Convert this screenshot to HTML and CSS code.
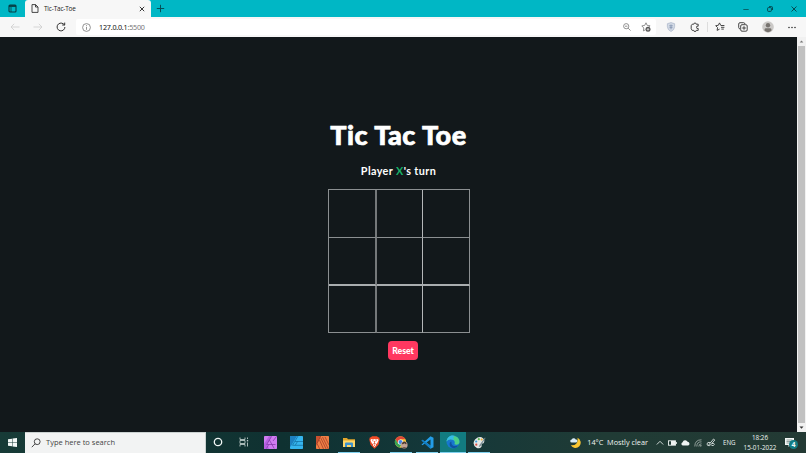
FILE: index.html
```html
<!DOCTYPE html>
<html lang="en">

<head>
  <meta charset="UTF-8">
  <title>Tic-Tac-Toe</title>
  <meta name="viewport" content="width=device-width, initial-scale=1.0">
  <link rel="stylesheet" href="styles.css">
</head>

<body>
  <!-- Tabs -->
  <header class="tabs">
    <div class="tab-menu">
      <svg width="9" height="9" viewBox="0 0 9 9"><rect x="1" y="1" width="7" height="7" rx="1" fill="none" stroke="#063c43" stroke-width="1.1"/><path d="M1 2h7" stroke="#063c43" stroke-width="1.800"/><path d="M3 3v5" stroke="#063c43" stroke-width=".8"/></svg>
    </div>
    <div class="tab">
      <svg width="8" height="9" viewBox="0 0 8 9" fill="none" stroke="#333" stroke-width=".9"><path d="M1 .6h3.600L7 3v5.400H1zM4.500.6V3H7"/></svg>
      <span class="tab-title">Tic-Tac-Toe</span>
      <svg width="6" height="6" viewBox="0 0 6 6" stroke="#222" stroke-width=".9"><path d="M.8.8l4.400 4.400M5.200.8L.8 5.200"/></svg>
    </div>
    <svg class="new-tab" width="9" height="9" viewBox="0 0 9 9" stroke="#064f57" stroke-width="1"><path d="M4.500.8v7.400M.8 4.500h7.400"/></svg>
    <div class="window-buttons">
      <svg width="6" height="6" viewBox="0 0 6 6" stroke="#064f57"><path d="M.3 3.500h5.400" stroke-width=".8"/></svg>
      <svg width="6" height="6" viewBox="0 0 6 6" fill="none" stroke="#053f46" stroke-width=".9"><rect x=".6" y="1.600" width="3.800" height="3.800" rx=".8"/><path d="M2 .6h2.500q1 0 1 1V4"/></svg>
      <svg width="6" height="6" viewBox="0 0 6 6" stroke="#053f46" stroke-width=".9"><path d="M.5.5l5 5M5.500.5l-5 5"/></svg>
    </div>
  </header>

  <!-- Toolbar -->
  <nav class="toolbar">
    <div class="nav-buttons">
      <svg width="10" height="8" viewBox="0 0 10 8" fill="none" stroke="#d0d0d0" stroke-width=".9"><path d="M9.500 4H1M4.200.8L1 4l3.200 3.200"/></svg>
      <svg width="10" height="8" viewBox="0 0 10 8" fill="none" stroke="#d0d0d0" stroke-width=".9"><path d="M.5 4H9M5.800.8L9 4 5.800 7.200"/></svg>
      <svg width="10" height="10" viewBox="0 0 10 10" fill="none" stroke="#333" stroke-width="1"><path d="M8.900 5A3.900 3.900 0 1 1 7.400 1.900L8.600 3M8.700.6V3H6.200"/></svg>
    </div>
    <div class="address">
      <svg width="9" height="9" viewBox="0 0 9 9" fill="none" stroke="#777" stroke-width=".8"><circle cx="4.500" cy="4.500" r="3.900"/><path d="M4.500 4v2.800M4.500 2.200v1"/></svg>
      <span class="url">127.0.0.1<span class="port">:5500</span></span>
      <svg class="zoom" width="8" height="8" viewBox="0 0 8 8" fill="none" stroke="#777" stroke-width=".8"><circle cx="3.200" cy="3.200" r="2.600"/><path d="M5.100 5.100l2.500 2.500M2 3.200h2.400"/></svg>
      <svg width="10" height="10" viewBox="0 0 10 10"><path d="M5 .8l1.200 2.600 2.900.4L7 5.700M4.200 7.900L2.400 8.900l.4-2.900L.8 3.900l2.900-.5L5 .8" fill="none" stroke="#777" stroke-width=".8"/><circle cx="7" cy="7.300" r="2.500" fill="#555"/><path d="M7 6v2.600M5.700 7.300h2.600" stroke="#fff" stroke-width=".6"/></svg>
    </div>
    <div class="tools">
      <svg width="10" height="10" viewBox="0 0 10 10"><path d="M5 .6l3.600 1.100v3Q8.400 8 5 9.500 1.600 8 1.400 4.700v-3z" fill="#d3dae5" stroke="#a9b5c8" stroke-width=".7"/><path d="M5 2.500v4.800M3.200 3.800h3.600M3.500 5.600h3" stroke="#8292ae" stroke-width=".8"/></svg>
      <svg width="10" height="10" viewBox="0 0 10 10" fill="none" stroke="#444" stroke-width="1"><path d="M2.200 2.200h1.600a1.200 1.200 0 0 1 2.400 0h2v2a1.200 1.200 0 1 0 0 2.200v2H6.200a1.200 1.200 0 0 1-2.400 0H2.200l-1-1.600V3.700z"/></svg>
      <svg width="10" height="10" viewBox="0 0 10 10" fill="none" stroke="#333" stroke-width=".9"><path d="M6 3.300H5.700L4.500.9 3.300 3.300l-2.600.4 1.900 1.900-.5 2.800 2.500-1.300M6 3.500h3.400M6 5.300h3.400M6.300 7.100h2.500"/></svg>
      <svg width="10" height="10" viewBox="0 0 10 10" fill="none" stroke="#333" stroke-width=".9"><path d="M2 7Q.7 6.700.7 5.500V2Q.7.7 2 .7h3.600Q6.800.7 7 2"/><rect x="2.700" y="2.700" width="6.500" height="6.500" rx="1.300"/><path d="M6 4.200v3.600M4.200 6h3.600"/></svg>
      <svg width="12" height="12" viewBox="0 0 12 12"><circle cx="6" cy="6" r="5.800" fill="#cbc9c7"/><circle cx="6" cy="4.300" r="2.200" fill="#77736f"/><path d="M2.600 9.800V8.500Q2.600 7.200 4 7.200h4q1.400 0 1.400 1.300v1.300Q6 12.600 2.600 9.800" fill="#77736f"/></svg>
      <svg width="8" height="3" viewBox="0 0 8 3" fill="#333"><circle cx="1" cy="1.500" r=".8"/><circle cx="4" cy="1.500" r=".8"/><circle cx="7" cy="1.500" r=".8"/></svg>
    </div>
  </nav>

  <!-- Game -->
  <div class="viewport">
    <main class="game">
      <h1 class="title">Tic Tac Toe</h1>
      <p class="status">Player <span class="player-x">X</span>'s turn</p>
      <div class="board">
        <div class="cell"></div>
        <div class="cell"></div>
        <div class="cell"></div>
        <div class="cell"></div>
        <div class="cell"></div>
        <div class="cell"></div>
        <div class="cell"></div>
        <div class="cell"></div>
        <div class="cell"></div>
      </div>
      <button class="reset">Reset</button>
    </main>
    <div class="scrollbar">
      <svg width="9" height="9" viewBox="0 0 9 9"><path d="M2.700 5.500h3.600L4.500 3.500z" fill="#777"/></svg>
      <div class="thumb"></div>
      <svg width="9" height="9" viewBox="0 0 9 9"><path d="M2.500 3.500h4l-2 2.300z" fill="#333"/></svg>
    </div>
  </div>

  <!-- Taskbar -->
  <footer class="taskbar">
    <div class="start">
      <svg width="9" height="9" viewBox="0 0 9 9" fill="#f3f8f7"><path d="M0 1.300L4 .7v3.500H0zM4.500.6L9 0v4.200H4.500zM0 4.800h4v3.500L0 7.700zM4.500 4.800H9V9l-4.500-.6z"/></svg>
    </div>
    <div class="search">
      <svg width="10" height="10" viewBox="0 0 10 10" fill="none" stroke="#333" stroke-width=".9"><circle cx="6.200" cy="3.700" r="2.900"/><path d="M4.100 5.800L.8 9.200"/></svg>
      <span>Type here to search</span>
    </div>
    <div class="apps">
      <div class="app"><svg width="10" height="10" viewBox="0 0 10 10"><circle cx="5" cy="5" r="3.700" fill="none" stroke="#f1f6f5" stroke-width="1.300"/></svg></div>
      <div class="app"><svg width="10" height="10" viewBox="0 0 10 10" fill="none" stroke="#b9c7c5" stroke-width=".9"><path d="M1 .5v2h5v-2M1 9.500v-2h5v2M1 3.500h5v3H1zM8.500.5v1.500M8.500 5.500v4"/><path d="M7.800 3.700h1.400" stroke-width="1.500"/></svg></div>
      <div class="app"><svg width="13" height="13" viewBox="0 0 13 13"><rect width="13" height="13" rx=".8" fill="#cf7cf2"/><path d="M0 8l5-8h3L3 8l2 5H0z" fill="#b45fe0"/><path d="M7.500.5L2.700 8.500h8.800M5.400 4l4.800 8.500M9 5l3.500-4.500M4.800 8.500L2.500 12.500" fill="none" stroke="#7d35a5" stroke-width=".7"/></svg></div>
      <div class="app"><svg width="13" height="13" viewBox="0 0 13 13"><rect width="13" height="13" rx=".8" fill="#35b5ee"/><path d="M0 0h7L1 10l-1 1z" fill="#1d80c0"/><path d="M8 0L2.500 9.300H13M5 5.500h8M7.500 5.500L5.200 9.300" fill="none" stroke="#136a9d" stroke-width=".7"/></svg></div>
      <div class="app"><svg width="13" height="13" viewBox="0 0 13 13"><rect width="13" height="13" rx=".8" fill="#ef7f45"/><path d="M0 0h5L1 8l-1 2z" fill="#c65130"/><path d="M4.800 0L1 7.500 3.700 13M3.500 4l4 9M4.800 2l5.300 11M6.500 1l5.800 12M9 1l4 8" fill="none" stroke="#9c3826" stroke-width=".7"/></svg></div>
      <div class="app open"><svg width="12" height="11" viewBox="0 0 12 11"><path d="M0 1h4l1 1.200h7V10H0z" fill="#e4a62c"/><path d="M0 3.500h12V10H0z" fill="#ffd767"/><path d="M2 10V6.500q0-1 1-1h6q1 0 1 1V10H8V8H4v2z" fill="#3e93ce"/></svg></div>
      <div class="app"><svg width="11" height="13" viewBox="0 0 11 13"><path d="M3 .3h5l1 1 1.200.2.500 2-1.200 5.200-4 4-4-4L.3 3.500l.5-2L2 1.300z" fill="#f04b26"/><path d="M2 3l2 .5 1.500-.5L7 3.500 9 3l.5 1.500-1.500 3-1.300.8L7 9.500 5.500 11 4 9.500l.3-1.200L3 7.500l-1.500-3z" fill="#fff"/><path d="M3.200 4.600l1.300.5M7.800 4.600l-1.300.5M5.500 5v2.500M4.500 7.500l1 .6 1-.6M5.500 9v1" stroke="#f04b26" stroke-width=".8"/></svg></div>
      <div class="app open"><svg width="14" height="13" viewBox="0 0 14 13"><circle cx="6.500" cy="6" r="5.700" fill="#f7cb3d"/><path d="M1.500 3.200a5.700 5.700 0 0 1 10 0H6.500L4 7.200z" fill="#df4637"/><path d="M1.500 3.200a5.700 5.700 0 0 0 4 8.300L8 7.500H4z" fill="#37a456"/><circle cx="6.500" cy="6" r="2.600" fill="#fff"/><circle cx="6.500" cy="6" r="2" fill="#4285e8"/><circle cx="10.200" cy="9" r="3.400" fill="#c2a394"/><path d="M7.800 8q.5-2.500 2.500-2.500T12.700 8l-1 .3-1-1-2 1z" fill="#4b3932"/><path d="M8 12q2-2 4.500-.2-2 1.200-4.500.2" fill="#70564d"/></svg></div>
      <div class="app open"><svg width="13" height="13" viewBox="0 0 13 13"><path d="M9.500.3l3 1.400v9.600l-3 1.400L3.700 7.500 1.500 9.200.5 8.500 3 6.500.5 4.500l1-.7 2.200 1.700zM9.500 3.500L5.500 6.500l4 3z" fill="#239de8" fill-rule="evenodd"/><path d="M.5 4.500l1-.7 8 6v2.900L3.700 7.500z" fill="#127bc0"/></svg></div>
      <div class="app open active"><svg width="14" height="14" viewBox="0 0 14 14"><circle cx="7" cy="7" r="6.500" fill="#1777cf"/><path d="M.6 6.500C1.200-1.500 13.500-1 13.500 7c0 2.300-2.300 3-4.500 2.500C7.800 9.200 9.200 8 8.700 6.700 7.500 3.700 2.400 3.500.6 6.500" fill="#4bcf88"/><path d="M.6 6.500C1.200 1 6-.5 9 1 6 2 8 4 8.700 6.700 7.500 3.700 2.400 3.500.6 6.500" fill="#35bbe7"/><path d="M5.600 6.800c-1 3 2 5.300 6.500 3.800-3 4.500-9 2.500-8.500-1.800.2-1.500 1-2 2-2" fill="#0f529f"/></svg></div>
      <div class="app open"><svg width="13" height="13" viewBox="0 0 13 13"><path d="M2 3.500Q6.500-.5 10 2.200q2.500 2 .5 5l-1.800.5-.2 3q-2 2.500-5 1Q-1.500 8.500 2 3.500" fill="#e4e8e7"/><circle cx="3.200" cy="5.500" r="1.100" fill="#3c9fdd"/><circle cx="5.800" cy="3.200" r="1.100" fill="#5eb554"/><circle cx="8.700" cy="3.500" r="1" fill="#edae35"/><circle cx="3.300" cy="8.700" r="1.100" fill="#d84d45"/><path d="M12 1.500L6.500 9l-.8 2.300 2-1.400L12.500 2z" fill="#7a8d95"/></svg></div>
    </div>
    <div class="weather">
      <svg width="12" height="12" viewBox="0 0 12 12"><path d="M7.500.8a5.300 5.300 0 1 1-6.700 7.500Q8.500 9 7.500.8" fill="#fbc632"/><path d="M1.700 5.500a1.500 1.500 0 0 1 0-3 2.200 2.200 0 0 1 4 0 1.500 1.500 0 0 1 .3 3z" fill="#d9ecf8"/></svg>
      <span>14°C&nbsp; Mostly clear</span>
    </div>
    <div class="tray">
      <svg width="8" height="8" viewBox="0 0 8 8" fill="none" stroke="#dfe7e4" stroke-width=".9"><path d="M.8 5.500L4 2.300l3.200 3.200"/></svg>
      <svg width="9" height="8" viewBox="0 0 9 8"><rect x=".5" y="1.800" width="7" height="4.400" fill="none" stroke="#eef3f1" stroke-width=".9"/><path d="M3 2h4.300v4H3zM8 3h.8v2H8z" fill="#eef3f1"/></svg>
      <svg width="9" height="8" viewBox="0 0 9 8"><path d="M1.800 6.500a1.700 1.700 0 0 1-.2-3.300A2.700 2.700 0 0 1 6.600 2.800a1.900 1.900 0 0 1 .6 3.700z" fill="#f0f4f3"/></svg>
      <svg width="8" height="8" viewBox="0 0 8 8" fill="none" stroke="#a9b6b1" stroke-width=".8"><path d="M.8 7.500Q.8.800 7.500.8M2.800 7.500q0-4.700 4.700-4.700M4.800 7.500q0-2.700 2.700-2.700"/><circle cx="6.800" cy="6.800" r=".5"/></svg>
      <svg width="10" height="9" viewBox="0 0 10 9" fill="none" stroke="#d7dfdc" stroke-width=".9"><path d="M3 6.500L7.500 1l1.300 1L4.500 7 2.800 7.300zM4.500 4.500Q1 3.700 1 6q0 2 2.500 1.700M6 5.500q2.500-.5 2.300 1Q8 8 5.500 7.500"/></svg>
      <span class="lang">ENG</span>
      <div class="clock">
        <span>18:26</span>
        <span>15-01-2022</span>
      </div>
      <div class="notifications">
        <svg width="9" height="9" viewBox="0 0 9 9"><path d="M0 0h9v7H5.500L3.500 9V7H0z" fill="#f2f6f5"/><path d="M1.500 2h6M1.500 3.500h6M1.500 5h3" stroke="#526b65" stroke-width=".6"/></svg>
        <span class="badge">4</span>
      </div>
    </div>
  </footer>
</body>

</html>
```
FILE: styles.css
```css
* {
  box-sizing: border-box;
}

body {
  margin: 0;
  height: 100vh;
  display: flex;
  flex-direction: column;
  overflow: hidden;
  font-family: "Open Sans", "Noto Sans", sans-serif;
  background-color: #12181b;
}

svg {
  display: block;
  flex: none;
}

/* Tabs */
.tabs {
  height: 17px;
  flex: none;
  display: flex;
  align-items: center;
  background-color: #00b7c5;
}

.tab-menu {
  width: 25px;
  display: flex;
  justify-content: center;
}

.tab {
  width: 126px;
  height: 17px;
  display: flex;
  align-items: center;
  gap: 5px;
  padding: 0 6px;
  background-color: #f7f7f7;
  border-radius: 3px 3px 0 0;
  font-size: 6.4px;
  letter-spacing: -0.15px;
  color: #222;
}

.tab-title {
  flex: 1;
}

.new-tab {
  margin-left: 5px;
}

.window-buttons {
  display: flex;
  gap: 18px;
  margin-left: auto;
  padding-right: 9px;
}

/* Toolbar */
.toolbar {
  height: 20px;
  flex: none;
  display: flex;
  align-items: center;
  background-color: #f7f7f7;
}

.nav-buttons {
  width: 76px;
  display: flex;
  align-items: center;
  gap: 13px;
  padding-left: 10px;
}

.address {
  width: 580px;
  height: 16px;
  display: flex;
  align-items: center;
  padding: 0 5px 0 6px;
  background-color: #fff;
  border-radius: 2px;
}

.url {
  margin-left: 8px;
  font-family: "Noto Sans", sans-serif;
  font-size: 7.2px;
  letter-spacing: -0.22px;
  color: #111;
}

.port {
  color: #777;
}

.zoom {
  margin-left: auto;
  margin-right: 10px;
}

.tools {
  flex: 1;
  display: flex;
  align-items: center;
  justify-content: space-between;
  padding: 0 10px 0 10px;
}

.tools svg:nth-child(2) {
  box-sizing: content-box;
  padding-right: 7px;
  margin-right: -7px;
  border-right: 1px solid #ddd;
}

/* Game */
.viewport {
  flex: 1;
  display: flex;
  min-height: 0;
}

.game {
  flex: 1;
  display: flex;
  flex-direction: column;
  align-items: center;
  padding: 79px 0 0;
  color: #fff;
}

.title {
  height: 38px;
  margin: 0;
  font-family: "Lato", sans-serif;
  font-size: 27px;
  font-weight: 900;
  line-height: 38px;
  letter-spacing: 0.5px;
  white-space: nowrap;
  -webkit-text-stroke: 0.7px #fff;
}

.status {
  height: 16px;
  margin: 9px 0 10px;
  font-family: "Lato", sans-serif;
  font-size: 10.8px;
  font-weight: bold;
  line-height: 16px;
  letter-spacing: 0.4px;
}

.player-x {
  color: #18b068;
}

.board {
  width: 142px;
  height: 144px;
  display: grid;
  grid-template-columns: 48px 46px 47px;
  grid-template-rows: 48px 48px 47px;
  border-left: 1px solid #8b8f91;
  border-top: 1px solid #8b8f91;
}

.cell {
  border-right: 1px solid #b4b7b9;
  border-bottom: 1px solid #8b8f91;
}

.cell:nth-child(3n) {
  border-right-color: #8b8f91;
}

.cell:nth-child(3n + 1) {
  border-right: 2px solid #74787a;
}

.cell:nth-child(n + 4):nth-child(-n + 6) {
  border-bottom: 2px solid #a9adaf;
}

.reset {
  width: 30px;
  height: 19px;
  margin-top: 8px;
  margin-left: 9px;
  padding: 0;
  border: none;
  border-radius: 4px;
  background-color: #ff3860;
  color: #fff;
  font-family: "Lato", sans-serif;
  font-size: 8.7px;
  font-weight: 900;
  cursor: pointer;
}

.scrollbar {
  width: 9px;
  display: flex;
  flex-direction: column;
  background-color: #f1f1f1;
}

.thumb {
  flex: 1;
  margin: 0 1px;
  background-color: #c1c1c1;
}

/* Taskbar */
.taskbar {
  height: 21px;
  flex: none;
  display: flex;
  align-items: center;
  background: linear-gradient(90deg, #173b37, #0f3131 35%, #14383a 55%, #203b35 75%, #233a34);
  color: #f0f5f3;
}

.start {
  width: 25px;
  display: flex;
  justify-content: center;
}

.search {
  width: 181px;
  height: 21px;
  display: flex;
  align-items: center;
  gap: 5px;
  padding-left: 6px;
  background-color: #f2f3f3;
  border: 1px solid #cbd2d1;
  border-width: 1px 1px 0 0;
  color: #444;
  font-size: 7.5px;
}

.search span {
  margin-top: -2px;
}

.apps {
  display: flex;
}

.app {
  width: 26px;
  height: 21px;
  display: flex;
  align-items: center;
  justify-content: center;
  padding-right: 2px;
  border-bottom: 1px solid transparent;
}

.open {
  padding-right: 0;
  background: linear-gradient(#7fd0ee, #7fd0ee) center bottom / 22px 1px no-repeat border-box;
}

.active {
  background-color: #127b80;
  border-bottom-color: #7fd0ee;
}

.weather {
  display: flex;
  align-items: center;
  gap: 5px;
  margin-left: auto;
  font-size: 7.3px;
  white-space: nowrap;
}

.weather span {
  margin-top: -1px;
}

.tray {
  display: flex;
  align-items: center;
  gap: 4px;
  padding-left: 8px;
}

.lang {
  width: 14px;
  margin-left: 3px;
  font-size: 6.2px;
}

.clock {
  width: 34px;
  margin-left: 2px;
  display: flex;
  flex-direction: column;
  align-items: center;
  font-size: 6.3px;
  line-height: 9.5px;
  white-space: nowrap;
}

.notifications {
  position: relative;
  width: 21px;
  margin-left: 4px;
}

.badge {
  position: absolute;
  left: 4px;
  top: 2px;
  width: 9px;
  height: 9px;
  border-radius: 50%;
  background-color: #127c83;
  font-size: 7px;
  font-weight: bold;
  line-height: 9px;
  text-align: center;
}
```
